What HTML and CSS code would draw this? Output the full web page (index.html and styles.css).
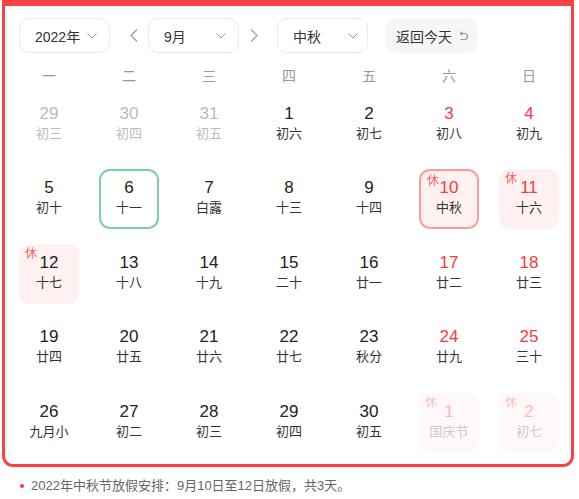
FILE: index.html
```html
<!DOCTYPE html>
<html lang="zh">
<head>
<meta charset="utf-8">
<link rel="stylesheet" href="styles.css">
</head>
<body>
<div class="cal">
  <div class="toolbar">
    <div class="select year"><span>2022年</span><svg class="chev" width="10" height="6" viewBox="0 0 10 6"><path d="M0.5 0.5 L5 5 L9.5 0.5" fill="none" stroke="#999" stroke-width="1"/></svg></div>
    <svg class="arrow prev" width="8" height="13" viewBox="0 0 8 13"><path d="M7 0.5 L1 6.5 L7 12.5" fill="none" stroke="#999" stroke-width="1.2"/></svg>
    <div class="select month"><span>9月</span><svg class="chev" width="10" height="6" viewBox="0 0 10 6"><path d="M0.5 0.5 L5 5 L9.5 0.5" fill="none" stroke="#999" stroke-width="1"/></svg></div>
    <svg class="arrow next" width="8" height="13" viewBox="0 0 8 13"><path d="M1 0.5 L7 6.5 L1 12.5" fill="none" stroke="#999" stroke-width="1.2"/></svg>
    <div class="select holiday"><span>中秋</span><svg class="chev" width="10" height="6" viewBox="0 0 10 6"><path d="M0.5 0.5 L5 5 L9.5 0.5" fill="none" stroke="#999" stroke-width="1"/></svg></div>
    <div class="today-btn"><span>返回今天</span><svg class="undo" width="9" height="10" viewBox="0 0 9 10"><path d="M1.5 2.5 H5.5 A3 3 0 0 1 5.5 8.5 H1.5" fill="none" stroke="#999" stroke-width="1.2"/><path d="M3.3 0.7 L1.5 2.5 L3.3 4.3" fill="none" stroke="#999" stroke-width="1.2"/></svg></div>
  </div>
  <div class="weekdays">
    <span>一</span><span>二</span><span>三</span><span>四</span><span>五</span><span>六</span><span>日</span>
  </div>
  <div class="grid">
    <div class="cell"><div class="box other"><div class="num">29</div><div class="lunar">初三</div></div></div>
    <div class="cell"><div class="box other"><div class="num">30</div><div class="lunar">初四</div></div></div>
    <div class="cell"><div class="box other"><div class="num">31</div><div class="lunar">初五</div></div></div>
    <div class="cell"><div class="box"><div class="num">1</div><div class="lunar">初六</div></div></div>
    <div class="cell"><div class="box"><div class="num">2</div><div class="lunar">初七</div></div></div>
    <div class="cell"><div class="box weekend"><div class="num">3</div><div class="lunar">初八</div></div></div>
    <div class="cell"><div class="box weekend"><div class="num">4</div><div class="lunar">初九</div></div></div>

    <div class="cell"><div class="box"><div class="num">5</div><div class="lunar">初十</div></div></div>
    <div class="cell"><div class="box today"><div class="num">6</div><div class="lunar">十一</div></div></div>
    <div class="cell"><div class="box"><div class="num">7</div><div class="lunar">白露</div></div></div>
    <div class="cell"><div class="box"><div class="num">8</div><div class="lunar">十三</div></div></div>
    <div class="cell"><div class="box"><div class="num">9</div><div class="lunar">十四</div></div></div>
    <div class="cell"><div class="box weekend rest selected"><span class="tag">休</span><div class="num">10</div><div class="lunar">中秋</div></div></div>
    <div class="cell"><div class="box weekend rest"><span class="tag">休</span><div class="num">11</div><div class="lunar">十六</div></div></div>

    <div class="cell"><div class="box rest"><span class="tag">休</span><div class="num">12</div><div class="lunar">十七</div></div></div>
    <div class="cell"><div class="box"><div class="num">13</div><div class="lunar">十八</div></div></div>
    <div class="cell"><div class="box"><div class="num">14</div><div class="lunar">十九</div></div></div>
    <div class="cell"><div class="box"><div class="num">15</div><div class="lunar">二十</div></div></div>
    <div class="cell"><div class="box"><div class="num">16</div><div class="lunar">廿一</div></div></div>
    <div class="cell"><div class="box weekend"><div class="num">17</div><div class="lunar">廿二</div></div></div>
    <div class="cell"><div class="box weekend"><div class="num">18</div><div class="lunar">廿三</div></div></div>

    <div class="cell"><div class="box"><div class="num">19</div><div class="lunar">廿四</div></div></div>
    <div class="cell"><div class="box"><div class="num">20</div><div class="lunar">廿五</div></div></div>
    <div class="cell"><div class="box"><div class="num">21</div><div class="lunar">廿六</div></div></div>
    <div class="cell"><div class="box"><div class="num">22</div><div class="lunar">廿七</div></div></div>
    <div class="cell"><div class="box"><div class="num">23</div><div class="lunar">秋分</div></div></div>
    <div class="cell"><div class="box weekend"><div class="num">24</div><div class="lunar">廿九</div></div></div>
    <div class="cell"><div class="box weekend"><div class="num">25</div><div class="lunar">三十</div></div></div>

    <div class="cell"><div class="box"><div class="num">26</div><div class="lunar">九月小</div></div></div>
    <div class="cell"><div class="box"><div class="num">27</div><div class="lunar">初二</div></div></div>
    <div class="cell"><div class="box"><div class="num">28</div><div class="lunar">初三</div></div></div>
    <div class="cell"><div class="box"><div class="num">29</div><div class="lunar">初四</div></div></div>
    <div class="cell"><div class="box"><div class="num">30</div><div class="lunar">初五</div></div></div>
    <div class="cell"><div class="box rest next-month"><span class="tag">休</span><div class="num">1</div><div class="lunar">国庆节</div></div></div>
    <div class="cell"><div class="box rest next-month"><span class="tag">休</span><div class="num">2</div><div class="lunar">初七</div></div></div>
  </div>
</div>
<div class="note"><span class="dot"></span><span>2022年中秋节放假安排：9月10日至12日放假，共3天。</span></div>
</body>
</html>
```

FILE: styles.css
```css
* { box-sizing: border-box; }
body {
  margin: 0;
  font-family: "Liberation Sans", "Noto Sans CJK SC", sans-serif;
  color: #333;
  background: #fff;
}
.cal {
  margin-left: 2px;
  width: 572px;
  height: 467px;
  border: 3px solid #fd4042;
  border-top-width: 6px;
  border-radius: 0 0 11px 11px;
  padding: 12px 2px 0 4px;
}
.toolbar {
  display: flex;
  align-items: center;
  height: 35px;
  padding-left: 10px;
}
.select {
  width: 91px;
  height: 35px;
  border: 1px solid #ebebeb;
  border-radius: 10px;
  display: flex;
  align-items: center;
  justify-content: space-between;
  padding: 0 12px 0 15px;
  font-size: 14px;
}
.select.holiday { padding-right: 9px; }
.chev { display: block; margin-top: 1px; }
.year { margin-right: 20px; }
.arrow { display: block; flex: none; }
.prev { margin-right: 10px; }
.month { margin-right: 11px; }
.next { margin-right: 19px; }
.holiday { margin-right: 17px; }
.today-btn {
  width: 92px;
  height: 35px;
  background: #f6f6f6;
  border-radius: 10px;
  display: flex;
  align-items: center;
  padding-left: 11px;
  font-size: 14px;
  gap: 7px;
}
.undo { display: block; }
.weekdays {
  display: grid;
  grid-template-columns: repeat(7, 80px);
  margin-top: 13px;
  height: 20px;
  line-height: 20px;
  font-size: 14px;
  color: #999;
  text-align: center;
}
.grid {
  display: grid;
  grid-template-columns: repeat(7, 80px);
  grid-auto-rows: 60px;
  row-gap: 14.5px;
  margin-top: 8.5px;
}
.cell {
  display: flex;
  justify-content: center;
}
.box {
  position: relative;
  width: 60px;
  height: 60px;
  border-radius: 11px;
  display: flex;
  flex-direction: column;
  align-items: center;
  justify-content: center;
  padding-bottom: 2px;
}
.num {
  font-size: 17px;
  line-height: 20px;
  color: #222;
}
.lunar {
  font-size: 13px;
  line-height: 20px;
  color: #333;
}
.other .num, .other .lunar { color: #bbb; }
.weekend .num { color: #f73a3c; }
.today { border: 2px solid #7dcfa6; }
.rest { background: #fff1f1; }
.selected { border: 2px solid #fc9c9c; }
.tag {
  position: absolute;
  left: 6px;
  top: 3px;
  font-size: 12px;
  line-height: 14px;
  color: #f55f62;
}
.next-month { background: #fff8f8; }
.next-month .num { color: #fdbdbe; }
.next-month .lunar { color: #ccc; }
.next-month .tag { color: #fcc4c4; }
.note {
  display: flex;
  align-items: center;
  margin-top: 10px;
  padding-left: 20px;
  font-size: 13px;
  color: #666;
  line-height: 18px;
}
.dot {
  width: 4px;
  height: 4px;
  border-radius: 50%;
  background: #f54245;
  margin-right: 7px;
}
```
